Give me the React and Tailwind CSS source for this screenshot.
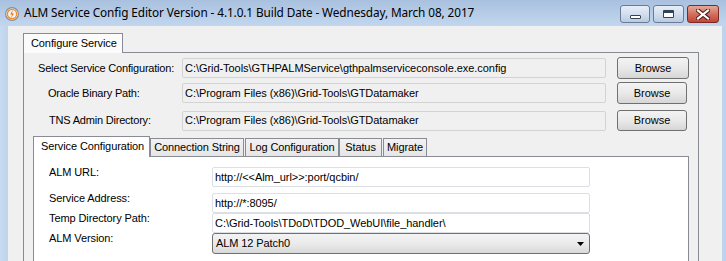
import React from "react";

const F = { fontFamily: '"Liberation Sans", Arial, sans-serif' };

function AppIcon() {
  return (
    <svg width="14" height="14" viewBox="0 0 14 14">
      <circle cx="7" cy="7" r="6.4" fill="#f4f4f4" stroke="#8b8b8b" strokeWidth="1.2" />
      <circle cx="7" cy="7" r="4.6" fill="none" stroke="#f08a2a" strokeWidth="1.3" />
      <path d="M7.8 2.8 L5.2 7.4 L7 7.4 L6.1 11.2 L8.9 6.4 L7.1 6.4 Z" fill="#e8751a" />
    </svg>
  );
}

function TitleButtons() {
  return (
    <div className="ml-auto mr-[7px] self-start mt-[5px] flex">
      <div className="w-[30px] h-[18px] rounded-[3px] border border-[#6b7b95] bg-gradient-to-b from-[#e6eef8] via-[#d3dfee] to-[#b9cbe1] flex items-center justify-center">
        <div className="w-[11px] h-[4px] mt-[5px] bg-white border border-[#344256] rounded-[1px]" />
      </div>
      <div className="ml-[3px] w-[31px] h-[18px] rounded-[3px] border border-[#6b7b95] bg-gradient-to-b from-[#e6eef8] via-[#d3dfee] to-[#b9cbe1] flex items-center justify-center">
        <div className="w-[11px] h-[8px] bg-white border border-[#344256] border-t-[3px] rounded-[1px]" />
      </div>
      <div className="ml-[3px] w-[32px] h-[18px] rounded-[3px] border border-[#7a2a28] bg-gradient-to-b from-[#e3a899] via-[#d3705e] to-[#c24535] flex items-center justify-center">
        <svg width="14" height="11" viewBox="0 0 14 11">
          <path d="M2 1.5 L12 9.5 M12 1.5 L2 9.5" stroke="#4b1a16" strokeWidth="4.2" strokeLinecap="square" />
          <path d="M2 1.5 L12 9.5 M12 1.5 L2 9.5" stroke="#ffffff" strokeWidth="2.2" strokeLinecap="square" />
        </svg>
      </div>
    </div>
  );
}

function ReadBox({ text }) {
  return (
    <div className="w-[424px] h-[20px] border border-[#d3d3d3] rounded-[2px] bg-[#f0f0f0] flex items-center pl-[2px] text-[11px] text-black tracking-[-0.05px] whitespace-nowrap overflow-hidden">
      {text}
    </div>
  );
}

function BrowseBtn({ w }) {
  return (
    <div
      className={`${w} h-full ml-[11px] border border-[#707070] rounded-[3px] bg-gradient-to-b from-[#f3f3f3] via-[#e9e9e9] to-[#d6d6d6] flex items-center justify-center text-[11px] text-black`}
    >
      Browse
    </div>
  );
}

function WhiteBox({ text }) {
  return (
    <div className="w-[378px] h-[20px] border border-[#dcdfe4] rounded-[2px] bg-white flex items-center pl-[2px] text-[11px] text-black tracking-[-0.05px] whitespace-nowrap overflow-hidden">
      {text}
    </div>
  );
}

function InnerTab({ label, w, ml }) {
  return (
    <div
      className={`${w} ${ml} h-[18px] mt-[2px] border border-[#898c95] border-b-0 bg-gradient-to-b from-[#f2f2f2] to-[#e6e6e6] flex items-center justify-center text-[11px] text-black tracking-[-0.1px] whitespace-nowrap`}
    >
      {label}
    </div>
  );
}

export default function App() {
  return (
    <div style={F} className="w-[726px] h-[261px] overflow-hidden flex flex-col bg-[#c3d7ee]">
      {/* Title bar */}
      <div className="h-[26px] flex items-center bg-gradient-to-b from-[#a9c1df] to-[#c2d6ee]">
        <div className="ml-[5px] mt-[1px] flex">
          <AppIcon />
        </div>
        <div
          className="ml-[5px] text-[11.8px] text-black whitespace-nowrap tracking-[-0.1px]"
          style={{ fontFamily: '"Noto Sans", "Open Sans", sans-serif' }}
        >
          ALM Service Config Editor Version - 4.1.0.1 Build Date - Wednesday, March 08, 2017
        </div>
        <TitleButtons />
      </div>

      {/* Body */}
      <div className="flex flex-1 min-h-0">
        <div className="w-[8px] bg-gradient-to-r from-[#c6daf0] to-[#bfd4ec]" />
        <div className="w-[714px] bg-[#f0f0f0] pl-[15px] pt-[7px] flex flex-col">
          {/* outer tab header */}
          <div className="flex">
            <div className="relative z-10 w-[100px] h-[20px] -mb-px border border-[#898c95] border-b-0 bg-[#fbfbfb] flex items-center pl-[7px] text-[11px] text-black tracking-[-0.1px]">
              Configure Service
            </div>
          </div>
          {/* outer tab page */}
          <div className="w-[676px] flex-1 border border-[#898c95] border-b-0 bg-[#f0f0f0] flex flex-col">
            <div className="mt-[4px] h-[22px] flex items-center">
              <div className="w-[158px] pl-[14px] text-[11px] tracking-[-0.2px] whitespace-nowrap">Select Service Configuration:</div>
              <ReadBox text="C:\Grid-Tools\GTHPALMService\gthpalmserviceconsole.exe.config" />
              <BrowseBtn w="w-[72px]" />
            </div>
            <div className="mt-[3px] h-[22px] flex items-center">
              <div className="w-[158px] pl-[24px] text-[11px] tracking-[-0.2px] whitespace-nowrap">Oracle Binary Path:</div>
              <ReadBox text="C:\Program Files (x86)\Grid-Tools\GTDatamaker" />
              <BrowseBtn w="w-[70px]" />
            </div>
            <div className="mt-[6px] h-[21px] flex items-center">
              <div className="w-[158px] pl-[25px] text-[11px] tracking-[-0.2px] whitespace-nowrap">TNS Admin Directory:</div>
              <ReadBox text="C:\Program Files (x86)\Grid-Tools\GTDatamaker" />
              <BrowseBtn w="w-[70px]" />
            </div>

            {/* inner tab control */}
            <div className="mt-[5px] ml-[9px] flex flex-col flex-1">
              <div className="flex items-start">
                <div className="relative z-10 w-[117px] h-[21px] -mb-px border border-[#898c95] border-b-0 bg-white flex items-center pl-[7px] pb-[1px] text-[11px] text-black tracking-[-0.1px] whitespace-nowrap">
                  Service Configuration
                </div>
                <InnerTab label="Connection String" w="w-[94px]" ml="ml-0" />
                <InnerTab label="Log Configuration" w="w-[94px]" ml="ml-px" />
                <InnerTab label="Status" w="w-[43px]" ml="ml-0" />
                <InnerTab label="Migrate" w="w-[44px]" ml="ml-px" />
              </div>
              <div className="w-[656px] flex-1 border border-[#898c95] border-b-0 bg-white flex flex-col">
                <div className="mt-[10px] flex items-start">
                  <div className="w-[178px] pl-[15px] -mt-px leading-[13px] text-[11px] tracking-[-0.1px]">ALM URL:</div>
                  <WhiteBox text="http://<<Alm_url>>:port/qcbin/" />
                </div>
                <div className="mt-[6px] flex items-start">
                  <div className="w-[178px] pl-[15px] -mt-px leading-[13px] text-[11px] tracking-[-0.1px]">Service Address:</div>
                  <WhiteBox text="http://*:8095/" />
                </div>
                <div className="flex items-start">
                  <div className="w-[178px] pl-[15px] -mt-px leading-[13px] text-[11px] tracking-[-0.1px]">Temp Directory Path:</div>
                  <WhiteBox text="C:\Grid-Tools\TDoD\TDOD_WebUI\file_handler\" />
                </div>
                <div className="flex items-start">
                  <div className="w-[178px] pl-[15px] -mt-px leading-[13px] text-[11px] tracking-[-0.1px]">ALM Version:</div>
                  <div className="w-[378px] h-[21px] border border-[#707070] rounded-[3px] bg-gradient-to-b from-[#f3f3f3] via-[#ebebeb] to-[#d9d9d9] flex items-center pl-[3px] pr-[5px] text-[11px] text-black tracking-[-0.1px]">
                    <span>ALM 12 Patch0</span>
                    <svg className="ml-auto" width="7" height="4" viewBox="0 0 7 4">
                      <path d="M0 0 L7 0 L3.5 4 Z" fill="#000" />
                    </svg>
                  </div>
                </div>
              </div>
            </div>
          </div>
        </div>
        <div className="w-[4px] bg-[#bed3ec]" />
      </div>
    </div>
  );
}
